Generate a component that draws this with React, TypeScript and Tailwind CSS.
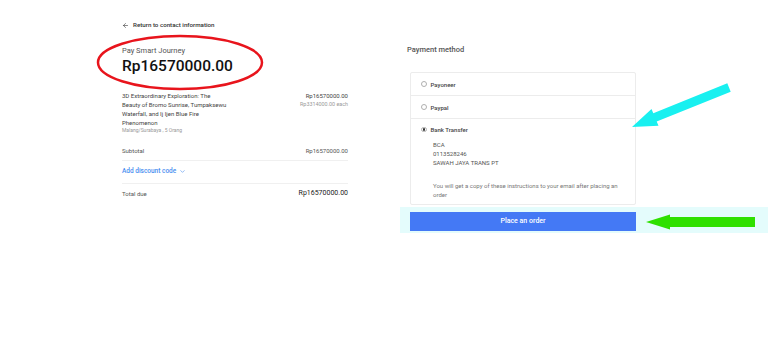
import { ArrowLeft, ChevronDown } from "lucide-react"

function Radio({ checked }: { checked?: boolean }) {
  return (
    <span className="flex h-[5.5px] w-[5.5px] items-center justify-center rounded-full border border-[#b0b0b0] bg-white">
      {checked && <span className="h-[2.5px] w-[2.5px] rounded-full bg-[#333]" />}
    </span>
  )
}

export default function App() {
  return (
    <div
      className="relative h-[363px] w-[768px] overflow-hidden bg-white text-[#333]"
      style={{ fontFamily: "Roboto, 'Liberation Sans', sans-serif" }}
    >
      {/* highlight band behind button */}
      <div className="absolute left-[400px] top-[207px] h-[26px] w-[368px] bg-[#e4fcfc]" />

      <div className="relative flex pl-[122px] pt-[21px]">
        {/* Left: order summary */}
        <div className="w-[226px]">
          <div className="flex h-[9px] items-center gap-[4px] text-[6.2px] font-medium text-[#333]">
            <ArrowLeft size={7} strokeWidth={2} />
            <span>Return to contact information</span>
          </div>

          <div className="mt-[15.5px] text-[7.5px] leading-[9px] text-[#555]">Pay Smart Journey</div>
          <div className="mt-[2.5px] text-[15.5px] font-medium leading-[18px] text-[#111]">Rp16570000.00</div>

          <div className="mt-[15.5px] flex justify-between">
            <div>
              <div className="text-[6px] leading-[9px] text-[#444]">
                <div>3D Extraordinary Exploration: The</div>
                <div>Beauty of Bromo Sunrise, Tumpaksewu</div>
                <div>Waterfall, and Ij Ijen Blue Fire</div>
                <div>Phenomenon</div>
              </div>
              <div className="text-[5px] leading-[7px] text-[#999]">Malang/Surabaya , 5 Orang</div>
            </div>
            <div className="text-right">
              <div className="text-[6px] leading-[9px] text-[#444]">Rp16570000.00</div>
              <div className="text-[5.4px] leading-[9px] text-[#999]">Rp3314000.00 each</div>
            </div>
          </div>

          <div className="mt-[12px] flex justify-between border-b border-[#f0f0f0] pb-[5px] text-[6px] leading-[9px] text-[#555]">
            <span>Subtotal</span>
            <span>Rp16570000.00</span>
          </div>

          <div className="flex items-center gap-[3px] border-b border-[#f0f0f0] pb-[7px] pt-[6.5px] text-[6.5px] font-medium leading-[9px] text-[#4a8ef0]">
            <span>Add discount code</span>
            <ChevronDown size={7} strokeWidth={2} />
          </div>

          <div className="mt-[4.5px] flex h-[10px] items-center justify-between">
            <span className="text-[6px] text-[#555]">Total due</span>
            <span className="text-[7px] text-[#222]">Rp16570000.00</span>
          </div>
        </div>

        {/* Right: payment */}
        <div className="ml-[59px] w-[229px]">
          <div className="mt-[23.5px] text-[7.5px] font-medium leading-[9px] text-[#555]">Payment method</div>

          <div className="ml-[3px] mt-[18.5px] w-[226px] rounded-[2px] border border-[#ececec]">
            <div className="flex h-[23px] items-center gap-[4px] border-b border-[#ececec] px-[10px] text-[6px] font-medium text-[#444]">
              <Radio />
              <span>Payoneer</span>
            </div>
            <div className="flex h-[23px] items-center gap-[4px] border-b border-[#ececec] px-[10px] text-[6px] font-medium text-[#444]">
              <Radio />
              <span>Paypal</span>
            </div>
            <div className="px-[10px] pb-[5px] pt-[6px]">
              <div className="flex h-[9px] items-center gap-[4px] text-[6px] font-medium text-[#444]">
                <Radio checked />
                <span>Bank Transfer</span>
              </div>
              <div className="mt-[6px] pl-[12px] text-[6px] leading-[9px] text-[#555]">
                <div>BCA</div>
                <div>0113528246</div>
                <div>SAWAH JAYA TRANS PT</div>
                <div className="mt-[14px] w-[192px] text-[#777]">
                  You will get a copy of these instructions to your email after placing an order
                </div>
              </div>
            </div>
          </div>

          <button className="ml-[3px] mt-[7px] flex h-[19px] w-[226px] items-center justify-center bg-[#4479f5] text-[7px] font-medium text-white">
            Place an order
          </button>
        </div>
      </div>

      {/* annotations */}
      <svg className="pointer-events-none absolute left-0 top-0" width="768" height="363" viewBox="0 0 768 363">
        <ellipse cx="180" cy="62.5" rx="82" ry="26.5" fill="none" stroke="#e8141c" strokeWidth="2.5" />
        <polygon
          points="632,127 658.5,125.7 656.7,121.5 730.7,91.7 727.3,83.3 653.3,113.2 651.5,109.1"
          fill="#19f0f0"
        />
        <polygon points="646,222 670,214.5 670,217 755,217 755,227 670,227 670,229.5" fill="#2fe000" />
      </svg>
    </div>
  )
}
